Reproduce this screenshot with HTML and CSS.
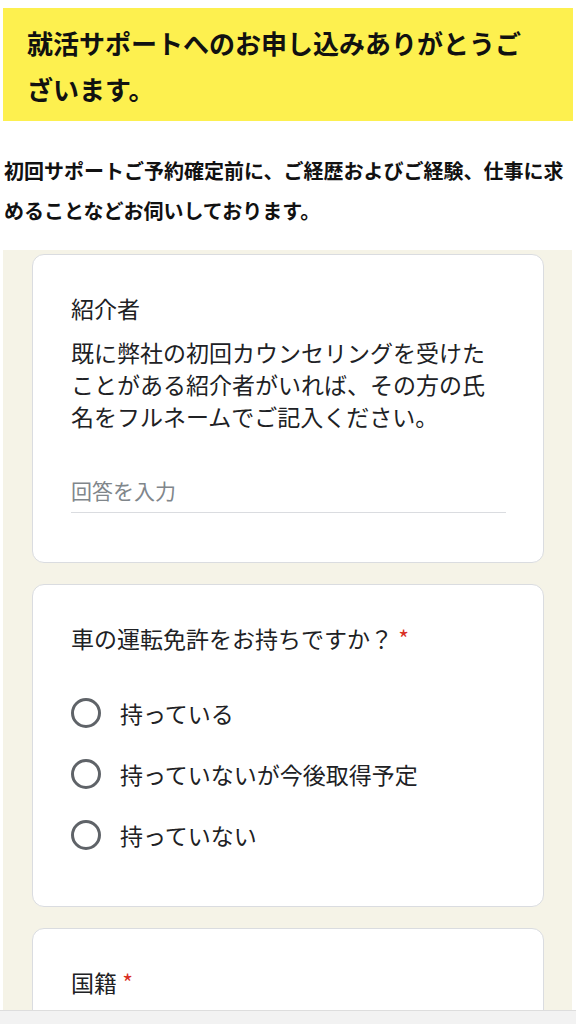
FILE: index.html
```html
<!DOCTYPE html>
<html lang="ja">
<head>
<meta charset="utf-8">
<title>就活サポート</title>
<link rel="stylesheet" href="styles.css">
</head>
<body>
<div class="page">
  <h1 class="banner">就活サポートへのお申し込みありがとうございます。</h1>
  <p class="lead">初回サポートご予約確定前に、ご経歴およびご経験、仕事に求めることなどお伺いしております。</p>
  <div class="form">
    <div class="card card-text">
      <div class="q-title">紹介者</div>
      <div class="q-desc">既に弊社の初回カウンセリングを受けたことがある紹介者がいれば、その方の氏名をフルネームでご記入ください。</div>
      <div class="input">回答を入力</div>
    </div>
    <div class="card card-choice">
      <div class="q-title">車の運転免許をお持ちですか？ <span class="req">*</span></div>
      <div class="options">
        <div class="opt"><span class="radio"></span><span class="opt-label">持っている</span></div>
        <div class="opt"><span class="radio"></span><span class="opt-label">持っていないが今後取得予定</span></div>
        <div class="opt"><span class="radio"></span><span class="opt-label">持っていない</span></div>
      </div>
    </div>
    <div class="card card-last">
      <div class="q-title">国籍 <span class="req">*</span></div>
    </div>
  </div>
</div>
<div class="toolbar"></div>
</body>
</html>
```
FILE: styles.css
```css
html, body {
  margin: 0;
  padding: 0;
  background: #ffffff;
}
body {
  font-family: "Noto Sans CJK JP", "Noto Sans", sans-serif;
  color: #202124;
  overflow: hidden;
  height: 1024px;
}
.page {
  width: 576px;
  height: 1024px;
  overflow: hidden;
  padding-top: 8px;
  box-sizing: border-box;
}
.banner {
  margin: 0 3px;
  background: #fdf04f;
  font-size: 26px;
  font-weight: 700;
  line-height: 46px;
  padding: 12px 30px 9px 24px;
  color: #111111;
}
.lead {
  margin: 30px 0 0 4px;
  padding-right: 4px;
  font-size: 20px;
  font-weight: 700;
  line-height: 40px;
  color: #111111;
}
.form {
  margin: 19px 4px 0 3px;
  background: #f5f3e7;
  padding: 4px 28px 0 29px;
  display: flex;
  flex-direction: column;
  gap: 21px;
  height: 774px;
  box-sizing: border-box;
  overflow: hidden;
}
.card {
  background: #ffffff;
  border: 1px solid #dadce0;
  border-radius: 12px;
  padding: 37px 37px 48px 38px;
  flex: none;
}
.card-text {
  padding-bottom: 49px;
}
.card-choice {
  padding-bottom: 41px;
}
.card-last {
  height: 97px;
  box-sizing: border-box;
  padding-bottom: 0;
}
.q-title {
  font-size: 23px;
  line-height: 32px;
  color: #202124;
}
.req {
  color: #d93025;
}
.q-desc {
  margin-top: 12px;
  font-size: 23px;
  line-height: 32px;
  color: #202124;
}
.input {
  margin-top: 42px;
  font-size: 21px;
  line-height: 32px;
  color: #80868b;
  padding-bottom: 6px;
  border-bottom: 1px solid #dadce0;
}
.options {
  margin-top: 28px;
  display: flex;
  flex-direction: column;
}
.opt {
  height: 61px;
  display: flex;
  align-items: center;
  gap: 19px;
}
.radio {
  width: 24px;
  height: 24px;
  border: 3px solid #5f6368;
  border-radius: 50%;
  flex: none;
}
.opt-label {
  font-size: 23px;
  line-height: 32px;
  color: #202124;
}
.toolbar {
  position: fixed;
  left: 0;
  right: 0;
  bottom: 0;
  height: 13px;
  background: #f2f2f2;
  border-top: 1px solid #dddddd;
}
```
